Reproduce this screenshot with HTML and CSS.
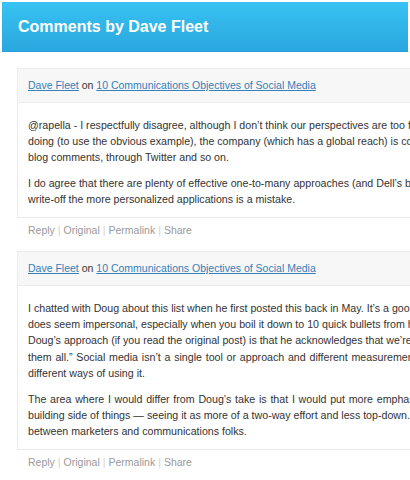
FILE: index.html
```html
<!DOCTYPE html>
<html lang="en">
<head>
    <meta charset="UTF-8">
    <meta name="viewport" content="width=device-width, initial-scale=1.0">
    <title>Comments by Dave Fleet</title>
    <link rel="stylesheet" href="styles.css">
</head>
<body>
    <div class="header">
        <h1>Comments by Dave Fleet</h1>
    </div>

    <div class="comments">
        <div class="comment">
            <div class="comment-head">
                <a href="#">Dave Fleet</a> on <a href="#">10 Communications Objectives of Social Media</a>
            </div>
            <div class="comment-body">
                <p>@rapella - I respectfully disagree, although I don’t think our perspectives are too far apart. What Dell is<br>
                doing (to use the obvious example), the company (which has a global reach) is connecting with people through<br>
                blog comments, through Twitter and so on.</p>
                <p>I do agree that there are plenty of effective one-to-many approaches (and Dell’s blog is one of them), but to<br>
                write-off the more personalized applications is a mistake.</p>
            </div>
        </div>
        <div class="actions">
            <a href="#">Reply</a><span class="sep">|</span><a href="#">Original</a><span class="sep">|</span><a href="#">Permalink</a><span class="sep">|</span><a href="#">Share</a>
        </div>

        <div class="comment">
            <div class="comment-head">
                <a href="#">Dave Fleet</a> on <a href="#">10 Communications Objectives of Social Media</a>
            </div>
            <div class="comment-body">
                <p>I chatted with Doug about this list when he first posted this back in May. It’s a good list, although it<br>
                does seem impersonal, especially when you boil it down to 10 quick bullets from his post. What I like about<br>
                Doug’s approach (if you read the original post) is that he acknowledges that we’re not going to do<br>
                <span class="wide">them all.” Social media isn’t a single tool or approach and different measurements apply to the</span><br>
                different ways of using it.</p>
                <p><span class="wide">The area where I would differ from Doug’s take is that I would put more emphasis on the relationship-</span><br>
                building side of things — seeing it as more of a two-way effort and less top-down. That goes for both<br>
                between marketers and communications folks.</p>
            </div>
        </div>
        <div class="actions">
            <a href="#">Reply</a><span class="sep">|</span><a href="#">Original</a><span class="sep">|</span><a href="#">Permalink</a><span class="sep">|</span><a href="#">Share</a>
        </div>
    </div>
</body>
</html>
```

FILE: styles.css
```css
html, body {
    overflow: hidden;
}
body {
    margin: 0;
    padding: 2px 2px 0;
    background: white;
    font-family: "Liberation Sans", Arial, sans-serif;
    font-size: 10.5px;
    line-height: 16.5px;
    color: #333;
}
.header {
    height: 50px;
    padding-left: 16px;
    background: linear-gradient(#38c2f2, #2aa7df);
    border-bottom: 1px solid #299fd5;
    box-sizing: border-box;
}
.header h1 {
    margin: 0;
    font-size: 16px;
    line-height: 50px;
    color: white;
}
.comments {
    width: 640px;
    padding: 16px 0 0 15px;
}
.comment {
    border: 1px solid #ececec;
    background: white;
}
.comment-head {
    padding: 8px 10px;
    background: #f7f7f7;
    border-bottom: 1px solid #ececec;
    white-space: nowrap;
}
.comment-head a {
    color: #3480b9;
}
.comment-body {
    padding: 14px 10px 0;
    font-size: 10.65px;
    line-height: 16.4px;
}
.comment-body p {
    margin: 0 0 9px;
    white-space: nowrap;
}
.wide {
    word-spacing: 0.8px;
}
.actions {
    margin: 4px 0 13px;
    padding-left: 11px;
    color: #999;
}
.actions a {
    color: #999;
    text-decoration: none;
}
.sep {
    margin: 0 3px;
    color: #d0d0d0;
}
```
